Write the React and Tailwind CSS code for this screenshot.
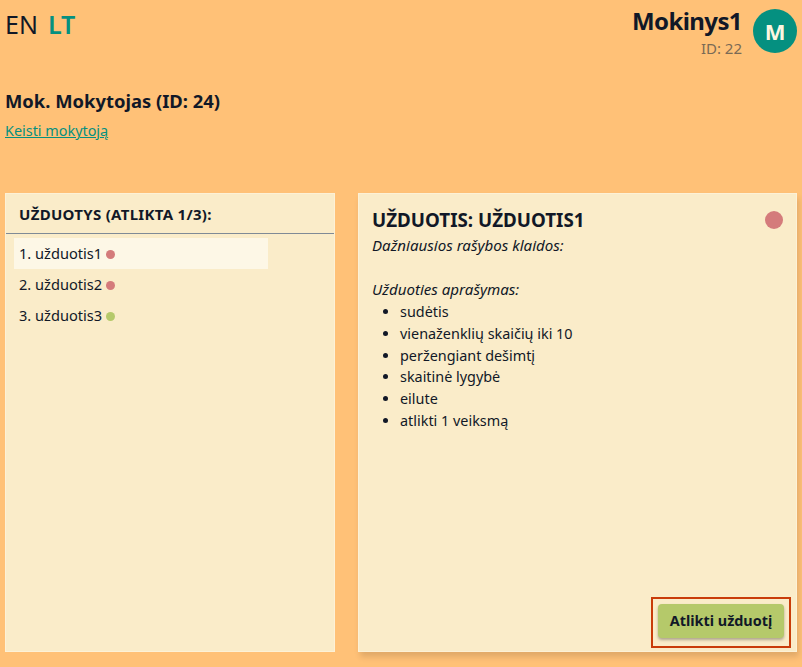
const tasks = [
  { name: '1. užduotis1', dot: 'bg-[#d47b7b]', active: true },
  { name: '2. užduotis2', dot: 'bg-[#d47b7b]' },
  { name: '3. užduotis3', dot: 'bg-[#b5c96a]' },
];

const topics = ['sudėtis', 'vienaženklių skaičių iki 10', 'peržengiant dešimtį', 'skaitinė lygybė', 'eilute', 'atlikti 1 veiksmą'];

export default function App() {
  return (
    <div className="h-[667px] overflow-hidden bg-[#ffc177] px-[5px] text-[#111827] font-['Noto_Sans',sans-serif]">
      {/* Top bar */}
      <header className="flex justify-between h-[83px]">
        <div className="flex gap-[10px] pt-[6px] text-[25px] leading-[36px]">
          <span>EN</span>
          <span className="font-semibold text-[#059080]">LT</span>
        </div>
        <div className="flex gap-[11px] pt-[9px]">
          <div className="text-right -mt-[2px]">
            <div className="text-[24px] leading-[28px] font-bold tracking-[-0.6px]">Mokinys1</div>
            <div className="text-[15px] leading-[20px] text-[#7a6a55] mt-[3px]">ID: 22</div>
          </div>
          <div className="w-[44px] h-[44px] rounded-full bg-[#059080] text-[#fdf6e0] text-[22px] font-bold flex items-center justify-center">M</div>
        </div>
      </header>

      {/* Teacher */}
      <div className="h-[110px]">
        <div className="text-[18.4px] leading-[26px] font-bold pt-[5px] h-[30px] box-content">Mok. Mokytojas (ID: 24)</div>
        <a href="#" className="text-[14.4px] leading-[20px] text-[#059080] underline">Keisti mokytoją</a>
      </div>

      <div className="flex gap-[23px] h-[459px]">
        {/* Task list */}
        <div className="w-[330px] bg-[#faecc9] border border-[#fdf1d6]">
          <div className="h-[40px] border-b border-[#7f8a96] pl-[13px] pt-[10px] text-[15px] leading-[20px] font-bold tracking-[0.3px]">UŽDUOTYS (ATLIKTA 1/3):</div>
          <ul className="pt-[4px] pl-[8px]">
            {tasks.map(t => (
              <li key={t.name} className={`w-[254px] h-[31px] pl-[5px] pt-[1px] flex items-center gap-[4px] text-[14.6px] ${t.active ? 'bg-[#fdf7e6]' : ''}`}>
                {t.name}
                <span className={`w-[9px] h-[9px] rounded-full ${t.dot}`}></span>
              </li>
            ))}
          </ul>
        </div>

        {/* Task details */}
        <div className="relative w-[439px] bg-[#faecc9] border border-[#fdf1d6] shadow-[2px_5px_6px_rgba(0,0,0,0.12)] pl-[13px] pt-[13px]">
          <div className="flex justify-between pr-[13px]">
            <h2 className="text-[18.8px] leading-[27px] font-bold">UŽDUOTIS: UŽDUOTIS1</h2>
            <span className="w-[18px] h-[18px] rounded-full bg-[#d47b7b] mt-[4px]"></span>
          </div>
          <p className="text-[15.1px] leading-[22px] italic h-[44px]">Dažniausios rašybos klaidos:</p>
          <p className="text-[15.1px] leading-[22px] italic">Užduoties aprašymas:</p>
          <ul className="list-disc pl-[28px] mt-[1px] text-[14.4px] leading-[21.8px]">
            {topics.map(t => <li key={t}>{t}</li>)}
          </ul>
          <div className="absolute right-[5px] bottom-[3px] border-2 border-[#c93c0a] pt-[5px] px-[5px] pb-[8px]">
            <button className="block w-[126px] h-[34px] rounded-[4px] bg-[#b5c96a] text-[14.4px] font-bold shadow-[0_2px_3px_rgba(0,0,0,0.3)]">Atlikti užduotį</button>
          </div>
        </div>
      </div>
    </div>
  );
}
